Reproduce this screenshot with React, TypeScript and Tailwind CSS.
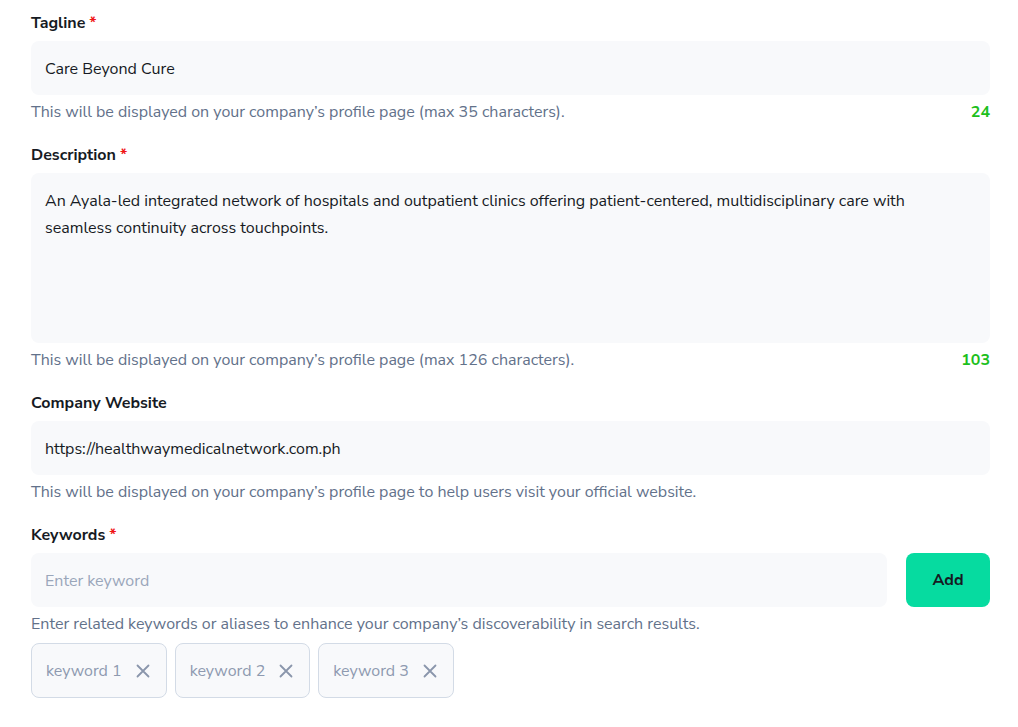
import React from "react";

const font = { fontFamily: '"Nunito Sans", "Noto Sans", "Open Sans", sans-serif' };

function Label({ text, required }: { text: string; required?: boolean }) {
  return (
    <div className="text-[16px] leading-[24px] font-bold text-[#161a23] mb-[6px]">
      {text}
      {required && <span className="text-[#f01515] ml-1">*</span>}
    </div>
  );
}

function Help({ text, count }: { text: string; count?: string }) {
  return (
    <div className="flex justify-between items-center mt-[6px] text-[16px] leading-[22px]">
      <span className="text-[#62718a]">{text}</span>
      {count && <span className="font-bold text-[#1dbf1d]">{count}</span>}
    </div>
  );
}

function Chip({ text }: { text: string }) {
  return (
    <div className="h-[55px] flex items-center gap-[13px] pl-[14px] pr-[15px] rounded-[8px] border border-[#d3dbe6] bg-[#f8f9fb] text-[16px] text-[#8e9ab0]">
      <span>{text}</span>
      <svg width="16" height="16" viewBox="0 0 16 16" fill="none" stroke="#8a96ab" strokeWidth="1.8" strokeLinecap="round">
        <path d="M2.5 2.5 L13.5 13.5 M13.5 2.5 L2.5 13.5" />
      </svg>
    </div>
  );
}

export default function App() {
  return (
    <div className="bg-white min-h-[727px] pl-[31px] pr-[28px] pt-[11px]" style={font}>
      <div>
        <Label text="Tagline" required />
        <div className="h-[54px] rounded-[8px] bg-[#f8f9fb] flex items-center px-[14px] pt-[1px] text-[16px] text-[#161a23]">
          Care Beyond Cure
        </div>
        <Help text="This will be displayed on your company’s profile page (max 35 characters)." count="24" />
      </div>
      <div className="mt-[20px]">
        <Label text="Description" required />
        <div className="h-[170px] rounded-[8px] bg-[#f8f9fb] pl-[14px] pr-[24px] pt-[15px] text-[16px] leading-[27px] text-[#161a23]">
          An Ayala-led integrated network of hospitals and outpatient clinics offering patient-centered, multidisciplinary care with seamless continuity across touchpoints.
        </div>
        <Help text="This will be displayed on your company’s profile page (max 126 characters)." count="103" />
      </div>
      <div className="mt-[20px]">
        <Label text="Company Website" />
        <div className="h-[54px] rounded-[8px] bg-[#f8f9fb] flex items-center px-[14px] pt-[1px] text-[16px] text-[#161a23]">
          https://healthwaymedicalnetwork.com.ph
        </div>
        <Help text="This will be displayed on your company’s profile page to help users visit your official website." />
      </div>
      <div className="mt-[20px]">
        <Label text="Keywords" required />
        <div className="flex gap-[19px]">
          <div className="flex-1 h-[54px] rounded-[8px] bg-[#f8f9fb] flex items-center px-[14px] pt-[1px] text-[16px] text-[#9aa6ba]">
            Enter keyword
          </div>
          <button className="w-[84px] h-[54px] rounded-[8px] bg-[#06dba0] text-[16px] font-bold text-[#161a23]">
            Add
          </button>
        </div>
        <Help text="Enter related keywords or aliases to enhance your company’s discoverability in search results." />
        <div className="flex gap-[8px] mt-[8px]">
          <Chip text="keyword 1" />
          <Chip text="keyword 2" />
          <Chip text="keyword 3" />
        </div>
      </div>
    </div>
  );
}
